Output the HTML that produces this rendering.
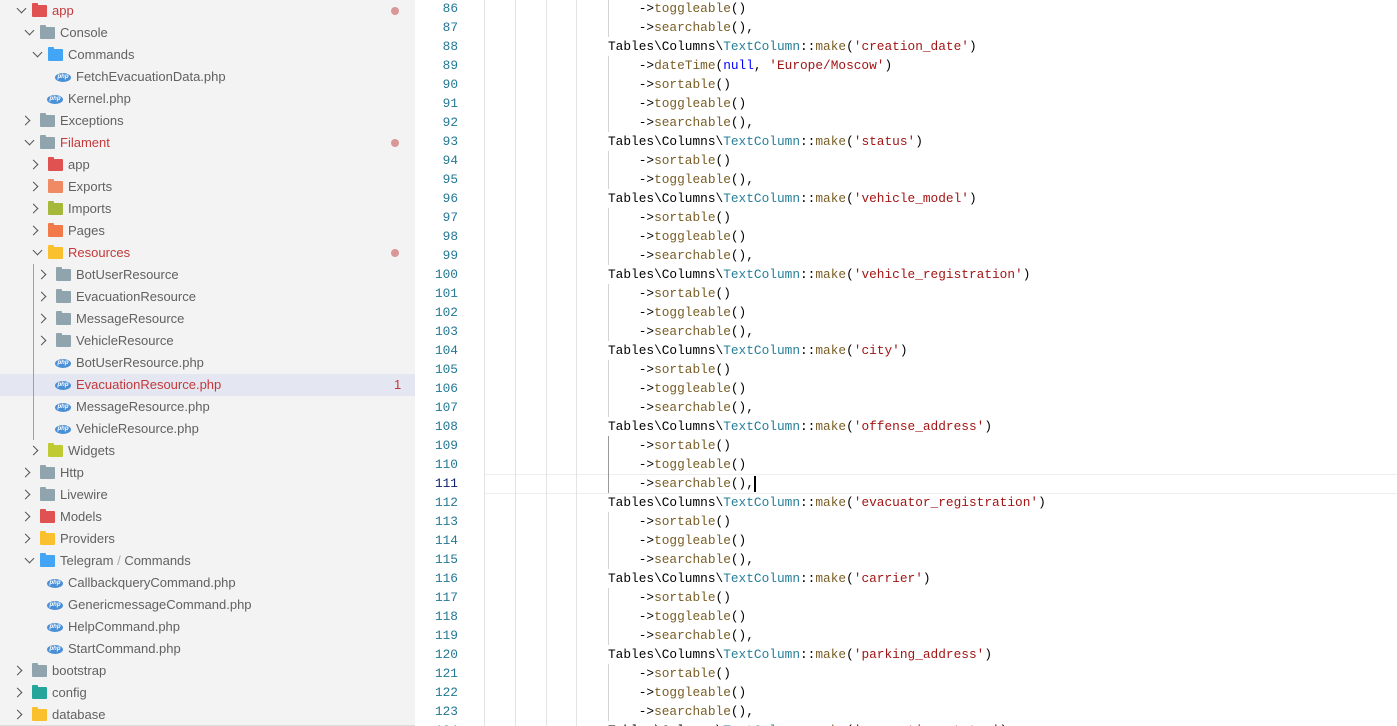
<!DOCTYPE html>
<html><head><meta charset="utf-8"><style>
*{margin:0;padding:0;box-sizing:border-box}
html,body{width:1397px;height:726px;overflow:hidden}
body{background:#fff;position:relative;font-family:"Liberation Sans",sans-serif}
#side{position:absolute;left:0;top:0;width:415px;height:726px;background:#f3f3f3;border-bottom:1px solid #ddd}
.r{position:absolute;left:0;width:415px;height:22px;font-size:13px;color:#616161;line-height:22px;white-space:nowrap}
.r .t{position:absolute;top:0}
.ch{position:absolute;top:6px;width:7px;height:7px;border-right:1.3px solid #555;border-bottom:1.3px solid #555}
.ch.c{transform:rotate(-45deg);top:7px}
.ch.o{transform:rotate(45deg);top:5px}
.fd{position:absolute;top:5px;width:15px;height:12px;border-radius:1px}
.fd:before{content:"";position:absolute;left:0;top:-2px;width:6px;height:3px;border-radius:1px 1px 0 0;background:inherit}
.php{position:absolute;top:7px;width:16px;height:9px;border-radius:50%;background:#4a8fd6;color:#fff;font-size:6px;line-height:9px;text-align:center;font-style:italic;font-weight:bold}
.red{color:#c4383a}
.dot{position:absolute;left:391px;top:7px;width:8px;height:8px;border-radius:50%;background:#d99797}
#code{position:absolute;left:415px;top:0;width:982px;height:726px;overflow:hidden}
.l{position:absolute;left:0;width:982px;height:19px;font-family:"Liberation Mono",monospace;font-size:12.8px;line-height:19px;white-space:pre;color:#000}
.n{position:absolute;left:0;width:43px;text-align:right;color:#237893}
.cd{position:absolute;left:193px;top:0}
.g{position:absolute;top:0;width:1px;height:19px;background:#e3e3e3}
.m{color:#795e26}.s{color:#a31515}.k{color:#267f99}.b{color:#0000ff}
</style></head><body>
<div id="side">
<div style="position:absolute;left:0;top:374px;width:415px;height:22px;background:#e4e6f1"></div>
<div style="position:absolute;left:33px;top:264px;width:1px;height:176px;background:#a0a0a0"></div>
<div class="r" style="top:0"><span class="ch o" style="left:18px"></span><span class="fd" style="left:32px;background:#e05252"></span><span class="t red" style="left:52px">app</span><span class="dot"></span></div>
<div class="r" style="top:22px"><span class="ch o" style="left:26px"></span><span class="fd" style="left:40px;background:#90a4ae"></span><span class="t" style="left:60px">Console</span></div>
<div class="r" style="top:44px"><span class="ch o" style="left:34px"></span><span class="fd" style="left:48px;background:#42a5f5"></span><span class="t" style="left:68px">Commands</span></div>
<div class="r" style="top:66px"><span class="php" style="left:55px">php</span><span class="t" style="left:76px">FetchEvacuationData.php</span></div>
<div class="r" style="top:88px"><span class="php" style="left:47px">php</span><span class="t" style="left:68px">Kernel.php</span></div>
<div class="r" style="top:110px"><span class="ch c" style="left:22px"></span><span class="fd" style="left:40px;background:#90a4ae"></span><span class="t" style="left:60px">Exceptions</span></div>
<div class="r" style="top:132px"><span class="ch o" style="left:26px"></span><span class="fd" style="left:40px;background:#90a4ae"></span><span class="t red" style="left:60px">Filament</span><span class="dot"></span></div>
<div class="r" style="top:154px"><span class="ch c" style="left:30px"></span><span class="fd" style="left:48px;background:#e05252"></span><span class="t" style="left:68px">app</span></div>
<div class="r" style="top:176px"><span class="ch c" style="left:30px"></span><span class="fd" style="left:48px;background:#f08a65"></span><span class="t" style="left:68px">Exports</span></div>
<div class="r" style="top:198px"><span class="ch c" style="left:30px"></span><span class="fd" style="left:48px;background:#a5b83a"></span><span class="t" style="left:68px">Imports</span></div>
<div class="r" style="top:220px"><span class="ch c" style="left:30px"></span><span class="fd" style="left:48px;background:#f27a4a"></span><span class="t" style="left:68px">Pages</span></div>
<div class="r" style="top:242px"><span class="ch o" style="left:34px"></span><span class="fd" style="left:48px;background:#fbc02d"></span><span class="t red" style="left:68px">Resources</span><span class="dot"></span></div>
<div class="r" style="top:264px"><span class="ch c" style="left:38px"></span><span class="fd" style="left:56px;background:#90a4ae"></span><span class="t" style="left:76px">BotUserResource</span></div>
<div class="r" style="top:286px"><span class="ch c" style="left:38px"></span><span class="fd" style="left:56px;background:#90a4ae"></span><span class="t" style="left:76px">EvacuationResource</span></div>
<div class="r" style="top:308px"><span class="ch c" style="left:38px"></span><span class="fd" style="left:56px;background:#90a4ae"></span><span class="t" style="left:76px">MessageResource</span></div>
<div class="r" style="top:330px"><span class="ch c" style="left:38px"></span><span class="fd" style="left:56px;background:#90a4ae"></span><span class="t" style="left:76px">VehicleResource</span></div>
<div class="r" style="top:352px"><span class="php" style="left:55px">php</span><span class="t" style="left:76px">BotUserResource.php</span></div>
<div class="r" style="top:374px"><span class="php" style="left:55px">php</span><span class="t red" style="left:76px">EvacuationResource.php</span><span class="t red" style="left:394px">1</span></div>
<div class="r" style="top:396px"><span class="php" style="left:55px">php</span><span class="t" style="left:76px">MessageResource.php</span></div>
<div class="r" style="top:418px"><span class="php" style="left:55px">php</span><span class="t" style="left:76px">VehicleResource.php</span></div>
<div class="r" style="top:440px"><span class="ch c" style="left:30px"></span><span class="fd" style="left:48px;background:#c0ca33"></span><span class="t" style="left:68px">Widgets</span></div>
<div class="r" style="top:462px"><span class="ch c" style="left:22px"></span><span class="fd" style="left:40px;background:#90a4ae"></span><span class="t" style="left:60px">Http</span></div>
<div class="r" style="top:484px"><span class="ch c" style="left:22px"></span><span class="fd" style="left:40px;background:#90a4ae"></span><span class="t" style="left:60px">Livewire</span></div>
<div class="r" style="top:506px"><span class="ch c" style="left:22px"></span><span class="fd" style="left:40px;background:#e05252"></span><span class="t" style="left:60px">Models</span></div>
<div class="r" style="top:528px"><span class="ch c" style="left:22px"></span><span class="fd" style="left:40px;background:#fbc02d"></span><span class="t" style="left:60px">Providers</span></div>
<div class="r" style="top:550px"><span class="ch o" style="left:26px"></span><span class="fd" style="left:40px;background:#42a5f5"></span><span class="t" style="left:60px">Telegram <span style="color:#aaa">/</span> Commands</span></div>
<div class="r" style="top:572px"><span class="php" style="left:47px">php</span><span class="t" style="left:68px">CallbackqueryCommand.php</span></div>
<div class="r" style="top:594px"><span class="php" style="left:47px">php</span><span class="t" style="left:68px">GenericmessageCommand.php</span></div>
<div class="r" style="top:616px"><span class="php" style="left:47px">php</span><span class="t" style="left:68px">HelpCommand.php</span></div>
<div class="r" style="top:638px"><span class="php" style="left:47px">php</span><span class="t" style="left:68px">StartCommand.php</span></div>
<div class="r" style="top:660px"><span class="ch c" style="left:14px"></span><span class="fd" style="left:32px;background:#90a4ae"></span><span class="t" style="left:52px">bootstrap</span></div>
<div class="r" style="top:682px"><span class="ch c" style="left:14px"></span><span class="fd" style="left:32px;background:#26a69a"></span><span class="t" style="left:52px">config</span></div>
<div class="r" style="top:704px"><span class="ch c" style="left:14px"></span><span class="fd" style="left:32px;background:#fbc02d"></span><span class="t" style="left:52px">database</span></div>
</div>
<div id="code">
<div style="position:absolute;left:69px;top:474px;width:913px;height:20px;border-top:1px solid #eee;border-bottom:1px solid #eee"></div>
<div id="lines"></div>
</div>
<script>
(function(){
var L=[
["a","<span class=m>toggleable</span>()"],
["a","<span class=m>searchable</span>(),"],
["t","creation_date"],
["a","<span class=m>dateTime</span>(<span class=b>null</span>, <span class=s>'Europe/Moscow'</span>)"],
["a","<span class=m>sortable</span>()"],["a","<span class=m>toggleable</span>()"],["a","<span class=m>searchable</span>(),"],
["t","status"],["a","<span class=m>sortable</span>()"],["a","<span class=m>toggleable</span>(),"],
["t","vehicle_model"],["a","<span class=m>sortable</span>()"],["a","<span class=m>toggleable</span>()"],["a","<span class=m>searchable</span>(),"],
["t","vehicle_registration"],["a","<span class=m>sortable</span>()"],["a","<span class=m>toggleable</span>()"],["a","<span class=m>searchable</span>(),"],
["t","city"],["a","<span class=m>sortable</span>()"],["a","<span class=m>toggleable</span>()"],["a","<span class=m>searchable</span>(),"],
["t","offense_address"],["a","<span class=m>sortable</span>()"],["a","<span class=m>toggleable</span>()"],["a","<span class=m>searchable</span>(),<span style='display:inline-block;width:2px;height:16px;background:#000;vertical-align:middle'></span>"],
["t","evacuator_registration"],["a","<span class=m>sortable</span>()"],["a","<span class=m>toggleable</span>()"],["a","<span class=m>searchable</span>(),"],
["t","carrier"],["a","<span class=m>sortable</span>()"],["a","<span class=m>toggleable</span>()"],["a","<span class=m>searchable</span>(),"],
["t","parking_address"],["a","<span class=m>sortable</span>()"],["a","<span class=m>toggleable</span>()"],["a","<span class=m>searchable</span>(),"],
["t","evacuation_status"]
];
var h="";
for(var i=0;i<L.length;i++){
 var n=86+i,tp=(n-86)*19-1;
 var g="";[69,100,131,161].forEach(function(x){g+="<span class=g style='left:"+x+"px'></span>"});
 var txt;
 if(L[i][0]=="t"){txt="Tables\\Columns\\<span class=k>TextColumn</span>::<span class=m>make</span>(<span class=s>'"+L[i][1]+"'</span>)";}
 else{g+="<span class=g style='left:193px;background:"+(n>=109&&n<=111?"#999":"#d3d3d3")+"'></span>";txt="    ->"+L[i][1];}
 h+="<div class=l style='top:"+tp+"px'><span class=n style='color:"+(n==111?"#0b216f":"#237893")+"'>"+n+"</span>"+g+"<span class=cd>"+txt+"</span></div>";
}
document.getElementById("lines").innerHTML=h;
})();
</script>
</body></html>
